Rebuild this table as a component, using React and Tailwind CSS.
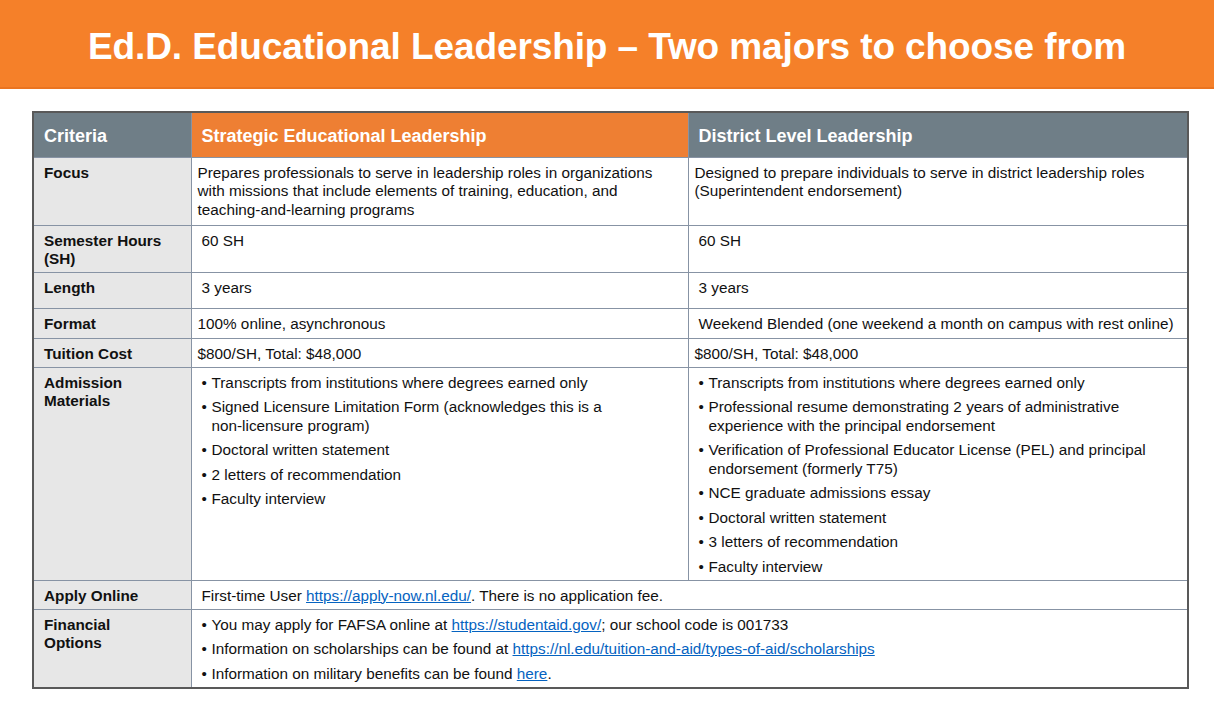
import React from 'react';

const A = ({ children }) => (
  <a href="#" className="text-[#0563c1] underline">{children}</a>
);

function Bullets({ items }) {
  return (
    <ul className="flex flex-col gap-[6px]">
      {items.map((it, i) => (
        <li key={i} className="flex">
          <span className="w-[10px] shrink-0">•</span>
          <span>{it}</span>
        </li>
      ))}
    </ul>
  );
}

const rows = [
  {
    label: 'Focus',
    h: 'h-[68px]',
    a: 'Prepares professionals to serve in leadership roles in organizations with missions that include elements of training, education, and teaching-and-learning programs',
    b: 'Designed to prepare individuals to serve in district leadership roles (Superintendent endorsement)',
  },
  { label: <>Semester Hours<br />(SH)</>, key: 'sh', h: 'h-[47px]', a: '60 SH', b: '60 SH', indent: true },
  { label: 'Length', h: 'h-[36px]', a: '3 years', b: '3 years', indent: true },
  {
    label: 'Format',
    h: 'h-[30px]',
    a: '100% online, asynchronous',
    b: 'Weekend Blended (one weekend a month on campus with rest online)',
    indentB: true,
  },
  { label: 'Tuition Cost', h: 'h-[29px]', a: '$800/SH, Total: $48,000', b: '$800/SH, Total: $48,000' },
  {
    label: <>Admission<br />Materials</>,
    key: 'adm',
    h: 'h-[213px]',
    indent: true,
    a: (
      <Bullets
        items={[
          'Transcripts from institutions where degrees earned only',
          <>Signed Licensure Limitation Form (acknowledges this is a<br />non-licensure program)</>,
          'Doctoral written statement',
          '2 letters of recommendation',
          'Faculty interview',
        ]}
      />
    ),
    b: (
      <Bullets
        items={[
          'Transcripts from institutions where degrees earned only',
          <>Professional resume demonstrating 2 years of administrative<br />experience with the principal endorsement</>,
          'Verification of Professional Educator License (PEL) and principal endorsement (formerly T75)',
          'NCE graduate admissions essay',
          'Doctoral written statement',
          '3 letters of recommendation',
          'Faculty interview',
        ]}
      />
    ),
  },
];

const cell = 'border border-[#8793a4]';

export default function App() {
  return (
    <div className="w-[1214px] h-[722px] bg-white font-['Liberation_Sans',Arial,sans-serif] text-[#111]">
      <div className="h-[89px] bg-[#f58029] border-b-2 border-[#ea7420] flex items-center justify-center">
        <h1 className="text-white font-bold text-[37px] tracking-[-0.1px] pt-[6px]">
          Ed.D. Educational Leadership – Two majors to choose from
        </h1>
      </div>

      <div className="pt-[22px] pl-[32px]">
        <table className="w-[1155px] border-collapse border-2 border-[#595959] table-fixed text-[15.3px] leading-[18.5px]">
          <colgroup>
            <col className="w-[158px]" />
            <col className="w-[497px]" />
            <col className="w-[500px]" />
          </colgroup>
          <thead>
            <tr className="h-[45px] text-white font-bold text-[18px]">
              <th className={`bg-[#6f7e87] text-left pl-[10px] pt-[3px] ${cell}`}>Criteria</th>
              <th className={`bg-[#ee7f33] text-left pl-[10px] pt-[3px] ${cell}`}>Strategic Educational Leadership</th>
              <th className={`bg-[#6f7e87] text-left pl-[10px] pt-[3px] ${cell}`}>District Level Leadership</th>
            </tr>
          </thead>
          <tbody>
            {rows.map((r) => (
              <tr key={r.key || r.label} className={r.h}>
                <td className={`bg-[#e7e7e7] align-top font-bold px-[10px] pt-[6px] ${cell}`}>
                  {r.label}
                </td>
                <td className={`align-top pt-[6px] pr-[8px] ${cell} ${r.indent ? 'pl-[10px]' : 'pl-[6px]'}`}>
                  {r.a}
                </td>
                <td className={`align-top pt-[6px] pr-[8px] ${cell} ${r.indent || r.indentB ? 'pl-[10px]' : 'pl-[6px]'}`}>
                  {r.b}
                </td>
              </tr>
            ))}
            <tr className="h-[29px]">
              <td className={`bg-[#e7e7e7] align-top font-bold px-[10px] pt-[6px] ${cell}`}>Apply Online</td>
              <td colSpan={2} className={`align-top pt-[6px] pl-[10px] ${cell}`}>
                First-time User <A>https://apply-now.nl.edu/</A>. There is no application fee.
              </td>
            </tr>
            <tr className="h-[79px]">
              <td className={`bg-[#e7e7e7] align-top font-bold px-[10px] pt-[6px] ${cell}`}>
                Financial<br />Options
              </td>
              <td colSpan={2} className={`align-top pt-[6px] pl-[10px] ${cell}`}>
                <Bullets
                  items={[
                    <>You may apply for FAFSA online at <A>https://studentaid.gov/</A>; our school code is 001733</>,
                    <>Information on scholarships can be found at <A>https://nl.edu/tuition-and-aid/types-of-aid/scholarships</A></>,
                    <>Information on military benefits can be found <A>here</A>.</>,
                  ]}
                />
              </td>
            </tr>
          </tbody>
        </table>
      </div>
    </div>
  );
}
